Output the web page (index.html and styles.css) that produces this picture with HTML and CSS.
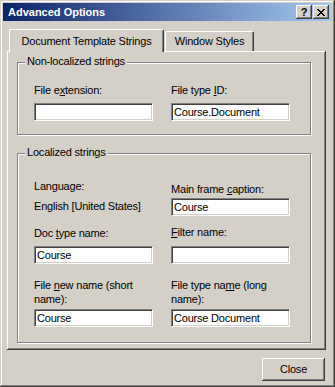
FILE: index.html
```html
<!DOCTYPE html>
<html lang="en">
<head>
    <meta charset="UTF-8">
    <meta name="viewport" content="width=device-width, initial-scale=1.0">
    <title>Advanced Options</title>
    <link rel="stylesheet" href="styles.css">
</head>
<body>
    <div class="window">
        <div class="titlebar">
            <span class="title">Advanced Options</span>
            <div class="caption-buttons">
                <span class="cap-btn help">?</span>
                <span class="cap-btn close">
                    <svg width="8" height="7" viewBox="0 0 8 7" shape-rendering="crispEdges">
                        <path d="M0 0h2v1H0zM6 0h2v1H6zM1 1h2v1H1zM5 1h2v1H5zM2 2h4v1H2zM3 3h2v1H3zM2 4h4v1H2zM1 5h2v1H1zM5 5h2v1H5zM0 6h2v1H0zM6 6h2v1H6z" fill="#000"/>
                    </svg>
                </span>
            </div>
        </div>

        <div class="content">
            <div class="tabs">
                <div class="tab active">Document Template Strings</div>
                <div class="tab inactive">Window Styles</div>
            </div>

            <div class="panel">
                <div class="group group-nonloc">
                    <div class="legend">Non-localized strings</div>
                    <div class="fields">
                        <div class="field">
                            <label for="fileExt">File e<u>x</u>tension:</label>
                            <input type="text" id="fileExt" class="input input-gap">
                        </div>
                        <div class="field">
                            <label for="fileTypeId">File type <u>I</u>D:</label>
                            <input type="text" id="fileTypeId" class="input input-gap" value="Course.Document">
                        </div>
                    </div>
                </div>

                <div class="group group-loc">
                    <div class="legend">Localized strings</div>
                    <div class="cols">
                        <div class="col col-left">
                            <div class="text">Language:</div>
                            <div class="text lang-value">English [United States]</div>
                            <label class="text doc-label" for="docType">Doc <u>t</u>ype name:</label>
                            <input type="text" id="docType" class="input input-gap" value="Course">
                        </div>
                        <div class="col col-right">
                            <label class="text" for="mainCaption">Main frame <u>c</u>aption:</label>
                            <input type="text" id="mainCaption" class="input caption-input" value="Course">
                            <label class="text filter-label" for="filterName"><u>F</u>ilter name:</label>
                            <input type="text" id="filterName" class="input filter-input">
                        </div>
                    </div>
                    <div class="fields fields-bottom">
                        <div class="field">
                            <label class="wrap-label" for="newName">File <u>n</u>ew name (short<br>name):</label>
                            <input type="text" id="newName" class="input name-input" value="Course">
                        </div>
                        <div class="field">
                            <label class="wrap-label" for="longName">File type na<u>m</u>e (long<br>name):</label>
                            <input type="text" id="longName" class="input name-input" value="Course Document">
                        </div>
                    </div>
                </div>
            </div>

            <div class="footer">
                <button type="button" class="btn">Close</button>
            </div>
        </div>
    </div>
</body>
</html>
```

FILE: styles.css
```css
body {
    margin: 0;
    background: #d4d0c8;
    font-family: "Liberation Sans", Arial, sans-serif;
    font-size: 11px;
    line-height: 13px;
    letter-spacing: -0.2px;
    color: #000;
}

/* outer dialog frame */
.window {
    width: 335px;
    height: 387px;
    box-sizing: border-box;
    padding: 3px;
    background: #d4d0c8;
    box-shadow: inset -1px -1px #404040, inset 1px 1px #d4d0c8, inset -2px -2px #808080, inset 2px 2px #fff;
}

.titlebar {
    height: 18px;
    display: flex;
    align-items: center;
    justify-content: space-between;
    padding: 0 3px 0 5px;
    background: linear-gradient(to right, #0a246a, #a6caf0);
    color: #fff;
    font-weight: bold;
    letter-spacing: 0;
}

.caption-buttons {
    display: flex;
    gap: 1px;
}

.cap-btn {
    width: 16px;
    height: 14px;
    box-sizing: border-box;
    display: flex;
    align-items: center;
    justify-content: center;
    background: #d4d0c8;
    color: #000;
    font-size: 11px;
    box-shadow: inset -1px -1px #404040, inset 1px 1px #fff, inset -2px -2px #808080;
}

.cap-btn.help {
    padding-top: 1px;
}

.content {
    padding: 8px 0 0 4px;
}

/* tab strip */
.tabs {
    display: flex;
    align-items: flex-end;
    height: 22px;
    padding-left: 2px;
}

.tab {
    box-sizing: border-box;
    height: 20px;
    padding-top: 3px;
    text-align: center;
    background: #d4d0c8;
    border: 1px solid;
    border-color: #fff #404040 #fff #fff;
    border-bottom: 0;
    border-radius: 2px 2px 0 0;
    box-shadow: inset -1px 0 #808080;
}

.tab.active {
    width: 155px;
    height: 23px;
    margin-bottom: -1px;
    padding-top: 5px;
    position: relative;
    z-index: 1;
}

.tab.inactive {
    width: 89px;
    margin-left: 1px;
}

.panel {
    width: 319px;
    height: 299px;
    box-sizing: border-box;
    padding: 11px 0 0 10px;
    box-shadow: inset -1px -1px #404040, inset 1px 1px #fff, inset -2px -2px #808080;
}

/* etched group boxes */
.group {
    width: 294px;
    box-sizing: border-box;
    border: 1px solid #808080;
    box-shadow: 1px 1px 0 #fff, inset 1px 1px 0 #fff;
    padding: 0 16px;
}

.group-nonloc {
    padding-bottom: 13px;
}

.group-loc {
    margin-top: 18px;
    padding-bottom: 15px;
}

.legend {
    width: fit-content;
    margin: -8px 0 0 -9px;
    padding: 0 2px;
    background: #d4d0c8;
}

.fields {
    display: flex;
    gap: 18px;
    margin-top: 16px;
}

.fields-bottom {
    margin-top: 14px;
}

.field, .col {
    width: 119px;
}

label, .text {
    display: block;
}

.wrap-label {
    line-height: 14px;
}

.cols {
    display: flex;
    align-items: flex-start;
    gap: 18px;
}

.col-left {
    padding-top: 21px;
}

.col-right {
    padding-top: 24px;
}

.lang-value {
    margin-top: 7px;
}

.doc-label {
    margin-top: 14px;
}

.filter-label {
    margin-top: 10px;
}

/* sunken edit boxes */
.input {
    display: block;
    width: 119px;
    height: 18px;
    box-sizing: border-box;
    margin: 0;
    padding: 1px 2px 2px;
    font: inherit;
    line-height: 13px;
    letter-spacing: inherit;
    color: #000;
    background: #fff;
    border: 1px solid;
    border-color: #808080 #fff #fff #808080;
    box-shadow: inset 1px 1px #404040, inset -1px -1px #d4d0c8;
    outline: none;
}

.input-gap {
    margin-top: 6px;
}

.caption-input {
    margin-top: 2px;
}

.filter-input {
    margin-top: 7px;
}

.name-input {
    margin-top: 3px;
}

.footer {
    display: flex;
    justify-content: flex-end;
    margin-top: 8px;
    padding-right: 7px;
}

.btn {
    width: 63px;
    height: 23px;
    padding: 0;
    border: 0;
    font: inherit;
    letter-spacing: inherit;
    color: #000;
    background: #d4d0c8;
    box-shadow: inset -1px -1px #404040, inset 1px 1px #fff, inset -2px -2px #808080;
}
```
